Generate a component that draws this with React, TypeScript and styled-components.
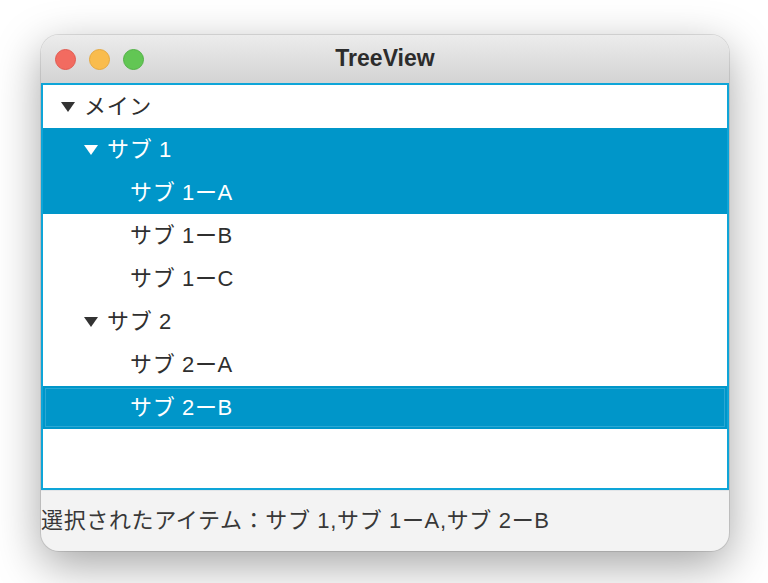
import React from 'react';
import styled, { createGlobalStyle } from 'styled-components';

const GlobalStyle = createGlobalStyle`
 html, body {
  margin: 0;
  padding: 0;
  background: #ffffff;
 }
`;

interface ITreeRow {
 label: string;
 depth: number;
 hasArrow?: boolean;
 selected?: boolean;
 focused?: boolean;
}

const rows: ITreeRow[] = [
 { label: 'メイン', depth: 0, hasArrow: true },
 { label: 'サブ 1', depth: 1, hasArrow: true, selected: true },
 { label: 'サブ 1ーA', depth: 2, selected: true },
 { label: 'サブ 1ーB', depth: 2 },
 { label: 'サブ 1ーC', depth: 2 },
 { label: 'サブ 2', depth: 1, hasArrow: true },
 { label: 'サブ 2ーA', depth: 2 },
 { label: 'サブ 2ーB', depth: 2, selected: true, focused: true },
];

function App() {
 return (
  <Page>
   <GlobalStyle />
   <Window>
    <TitleBar>
     <Light color="#f26b60" edge="#e05a50" />
     <Light color="#f9bc4d" edge="#e5a83f" />
     <Light color="#62c654" edge="#52b146" />
     <Title>TreeView</Title>
    </TitleBar>
    <Tree>
     {rows.map((row) => (
      <Row key={row.label} selected={row.selected} focused={row.focused}>
       <Indent depth={row.depth} />
       <ArrowSlot>{row.hasArrow && <Arrow selected={row.selected} />}</ArrowSlot>
       <Label>{row.label}</Label>
      </Row>
     ))}
    </Tree>
    <Status>選択されたアイテム：サブ 1,サブ 1ーA,サブ 2ーB</Status>
   </Window>
  </Page>
 );
}

export default App;

/* Styled Components */

const Page = styled.div`
 width: 768px;
 height: 583px;
 padding: 35px 39px 32px 41px;
 box-sizing: border-box;
 overflow: hidden;
 background: #ffffff;
`;

const Window = styled.div`
 width: 688px;
 height: 516px;
 display: flex;
 flex-direction: column;
 border-radius: 18px;
 overflow: hidden;
 background: #f3f3f3;
 box-shadow: 0 0 0 1px rgba(0, 0, 0, 0.1), 0 14px 46px rgba(0, 0, 0, 0.36);
 font-family: 'Liberation Sans', 'Noto Sans CJK JP', sans-serif;
`;

const TitleBar = styled.div`
 height: 48px;
 flex: none;
 display: flex;
 align-items: center;
 gap: 13px;
 padding: 0 0 0 14px;
 box-sizing: border-box;
 position: relative;
 background: linear-gradient(#ececec, #d3d3d3);
`;

const Light = styled.div<{ color: string; edge: string }>`
 width: 21px;
 height: 21px;
 border-radius: 50%;
 box-sizing: border-box;
 background: ${(props) => props.color};
 border: 1px solid ${(props) => props.edge};
`;

const Title = styled.div`
 position: absolute;
 left: 0;
 right: 0;
 top: 0;
 bottom: 2px;
 display: flex;
 align-items: center;
 justify-content: center;
 font-size: 23px;
 font-weight: 700;
 color: #2c2c2c;
`;

const Tree = styled.div`
 height: 407px;
 flex: none;
 box-sizing: border-box;
 background: #ffffff;
 border: 2px solid #0ea5d8;
`;

const Row = styled.div<{ selected?: boolean; focused?: boolean }>`
 height: 43px;
 display: flex;
 align-items: center;
 box-sizing: border-box;
 background: ${(props) => (props.selected ? '#0096c9' : '#ffffff')};
 color: ${(props) => (props.selected ? '#ffffff' : '#2f2f2f')};
 box-shadow: ${(props) => (props.focused ? 'inset 0 0 0 2px #0096c9, inset 0 0 0 3px #2aa8d4' : 'none')};
`;

const Indent = styled.div<{ depth: number }>`
 flex: none;
 width: ${(props) => 18 + props.depth * 23}px;
`;

const ArrowSlot = styled.div`
 flex: none;
 width: 23px;
 height: 100%;
 display: flex;
 align-items: center;
`;

const Arrow = styled.div<{ selected?: boolean }>`
 width: 0;
 height: 0;
 border-left: 7.5px solid transparent;
 border-right: 7.5px solid transparent;
 border-top: 10px solid ${(props) => (props.selected ? '#ffffff' : '#333333')};
`;

const Label = styled.div`
 font-size: 22px;
 line-height: 43px;
 letter-spacing: 0.65px;
 white-space: nowrap;
`;

const Status = styled.div`
 flex: 1;
 display: flex;
 align-items: center;
 box-sizing: border-box;
 padding-bottom: 6px;
 font-size: 22px;
 letter-spacing: 0.65px;
 color: #383838;
 border-top: 1px solid #e2e5e8;
 white-space: pre;
`;
